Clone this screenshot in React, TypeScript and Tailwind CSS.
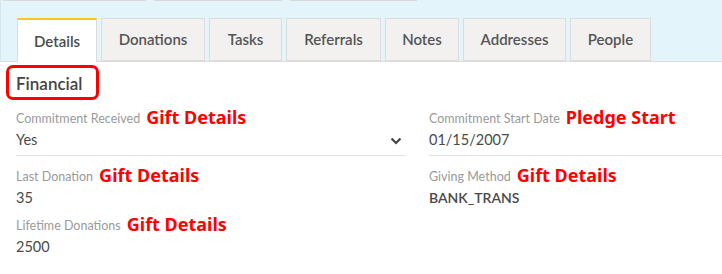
import React from "react";

const tabs = ["Details", "Donations", "Tasks", "Referrals", "Notes", "Addresses", "People"];
const tabW = [80, 104, 73, 95, 74, 103, 81];

function Ann({ children }: { children: React.ReactNode }) {
  return (
    <span className="ml-[6px] text-[18px] leading-none font-bold text-[#ff0000]" style={{ fontFamily: '"Noto Sans", sans-serif' }}>
      {children}
    </span>
  );
}

function Field({
  label,
  ann,
  value,
  underline,
  chevron,
  bold,
}: {
  label: string;
  ann: string;
  value: string;
  underline?: boolean;
  chevron?: boolean;
  bold?: boolean;
}) {
  return (
    <div className="flex flex-col">
      <div className="flex items-end h-[20px]">
        <span className="text-[12.5px] leading-none text-[#9a9a9a] pb-[1px]">{label}</span>
        <Ann>{ann}</Ann>
      </div>
      <div
        className={`flex justify-between ${underline ? "h-[30px] items-center border-b border-[#e0e0e0]" : "h-[21px] items-end"}`}
      >
        <span className={`text-[14.5px] leading-none text-[#4a4a4a] ${bold ? "font-semibold text-[14px]" : ""}`}>{value}</span>
        {chevron && (
          <svg width="12" height="8" viewBox="0 0 12 8" className="mr-[4px]">
            <path d="M1.5 1.5 L6 6 L10.5 1.5" stroke="#444" strokeWidth="2.2" fill="none" />
          </svg>
        )}
      </div>
    </div>
  );
}

export default function App() {
  return (
    <div className="w-[722px] h-[274px] overflow-hidden bg-white" style={{ fontFamily: "Lato, sans-serif" }}>
      <div className="h-[62px] bg-[#e3f4fb] border-b border-[#dcdcdc] border-l border-l-[#d5e6ee] flex flex-col justify-between">
        <div className="flex pl-[2px]">
          <div className="w-[143px] h-[1px] bg-[#d8d8d8]" />
          <div className="w-[128px] h-[1px] bg-[#d8d8d8] ml-[8px]" />
          <div className="w-[127px] h-[1px] bg-[#d8d8d8] ml-[8px]" />
        </div>
        <div className="flex pl-[16px] gap-[4px] -mb-[1px]">
          {tabs.map((t, i) => (
            <div
              key={t}
              style={{ width: tabW[i] }}
              className={
                i === 0
                  ? "h-[44px] bg-white border border-[#dcdcdc] border-b-0 border-t-2 border-t-[#f7c624] flex items-center justify-center text-[15px] font-semibold text-[#4a4a4a]"
                  : "h-[43px] bg-[#f2f1f0] border border-[#dcdcdc] flex items-center justify-center text-[15px] font-semibold text-[#555]"
              }
            >
              {t}
            </div>
          ))}
        </div>
      </div>
      <div className="px-[16px]">
        <div className="pt-[10px] h-[44px]">
          <span className="relative inline-block text-[17px] font-semibold text-[#444] leading-none pt-[3px]">
            Financial
            <span className="absolute -left-[10px] -top-[7px] w-[93px] h-[35px] border-[3px] border-[#ff0000] rounded-[7px]" />
          </span>
        </div>
        <div className="grid grid-cols-[390px_1fr] gap-x-[23px]">
          <div className="flex flex-col gap-[8px]">
            <Field label="Commitment Received" ann="Gift Details" value="Yes" underline chevron />
            <Field label="Last Donation" ann="Gift Details" value="35" />
            <Field label="Lifetime Donations" ann="Gift Details" value="2500" />
          </div>
          <div className="flex flex-col gap-[8px] -mr-[16px]">
            <Field label="Commitment Start Date" ann="Pledge Start" value="01/15/2007" underline />
            <Field label="Giving Method" ann="Gift Details" value="BANK_TRANS" bold />
          </div>
        </div>
      </div>
    </div>
  );
}
